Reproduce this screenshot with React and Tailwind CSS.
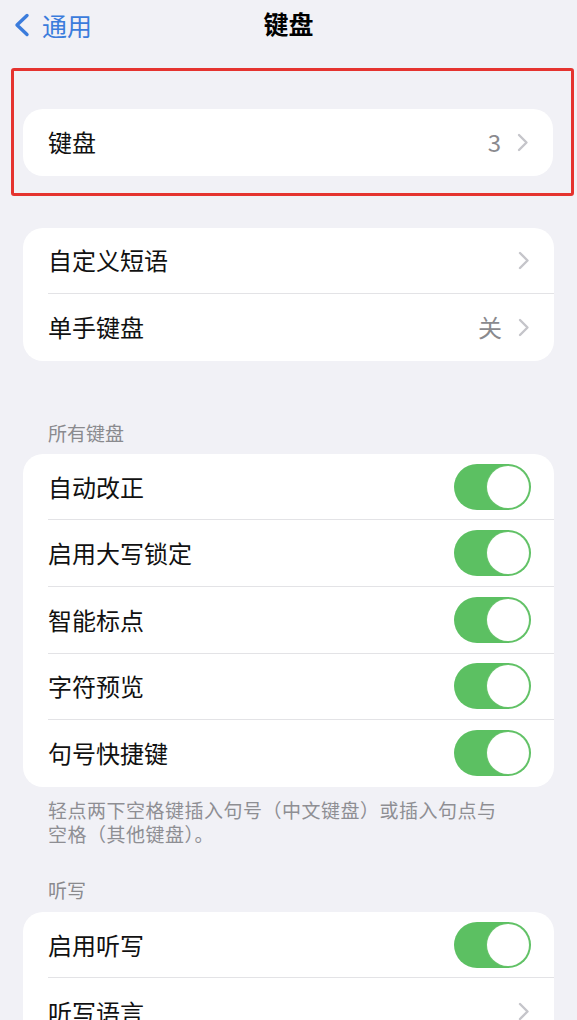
import React from 'react';

const font = { fontFamily: '"Noto Sans CJK SC", "Noto Sans", sans-serif' };

function Chevron() {
  return (
    <svg width="12" height="19" viewBox="0 0 12 19" className="shrink-0">
      <path d="M2 2 L9.5 9.5 L2 17" fill="none" stroke="#c5c5ca" strokeWidth="2.4" strokeLinecap="round" strokeLinejoin="round" />
    </svg>
  );
}

function Toggle() {
  return (
    <div className="relative w-[77px] h-[46px] rounded-full bg-[#5cc062] shrink-0">
      <div className="absolute right-[2px] top-[2px] w-[42px] h-[42px] rounded-full bg-white shadow-[0_0_0_1px_rgba(120,200,120,0.5)]" />
    </div>
  );
}

function Row({ label, value, chevron, toggle, last }) {
  return (
    <div className="pl-[25px]">
      <div className={`flex items-center h-[66.6px] pr-[24px] ${last ? '' : 'border-b border-[#e3e3e6]'}`}>
        <div className="flex-1 text-[24px] text-[#111]">{label}</div>
        {value && <div className="text-[24px] text-[#8a8a8e] mr-[16px]">{value}</div>}
        {chevron && <Chevron />}
        {toggle && <div className="-mr-[1px]"><Toggle /></div>}
      </div>
    </div>
  );
}

function Card({ children }) {
  return <div className="bg-white rounded-[20px] overflow-hidden">{children}</div>;
}

export default function App() {
  const allKeyboards = ['自动改正', '启用大写锁定', '智能标点', '字符预览', '句号快捷键'];

  return (
    <div className="w-[577px] h-[1020px] overflow-hidden bg-[#f1f1f6]" style={font}>
      {/* 导航栏 */}
      <div className="relative h-[48px] flex items-center justify-center">
        <div className="absolute left-[13px] top-[13px] flex items-center">
          <svg width="18" height="24" viewBox="0 0 18 24">
            <path d="M14 2.5 L4 12 L14 21.5" fill="none" stroke="#3b7cdc" strokeWidth="3.4" strokeLinecap="round" strokeLinejoin="round" />
          </svg>
          <span className="ml-[11px] text-[25px] leading-[24px] text-[#3b7cdc]">通用</span>
        </div>
        <div className="text-[25px] font-bold text-black">键盘</div>
      </div>

      <div className="mt-[20px] ml-[11px] mr-[3px] border-[3px] border-[#e5332f] rounded-[3px] pt-[38px] pb-[17px] pl-[9px] pr-[18px]">
        <Card>
          <Row label="键盘" value="3" chevron last />
        </Card>
      </div>

      <div className="mx-[23px] mt-[32px]">
        <Card>
          <Row label="自定义短语" chevron />
          <Row label="单手键盘" value="关" chevron last />
        </Card>
      </div>

      <div className="mt-[60px] mb-[9px] pl-[48px] text-[19px] leading-[24px] text-[#8a8a8e]">所有键盘</div>
      <div className="mx-[23px]">
        <Card>
          {allKeyboards.map((l, i) => (
            <Row key={l} label={l} toggle last={i === allKeyboards.length - 1} />
          ))}
        </Card>
      </div>

      <div className="mt-[11px] pl-[48px] text-[19px] leading-[24px] tracking-[0.5px] text-[#8e8e93]">
        <div>轻点两下空格键插入句号（中文键盘）或插入句点与</div>
        <div>空格（其他键盘）。</div>
      </div>

      <div className="mt-[32px] mb-[10px] pl-[48px] text-[19px] leading-[24px] text-[#8a8a8e]">听写</div>
      <div className="mx-[23px]">
        <Card>
          <Row label="启用听写" toggle />
          <Row label="听写语言" chevron last />
        </Card>
      </div>
    </div>
  );
}
